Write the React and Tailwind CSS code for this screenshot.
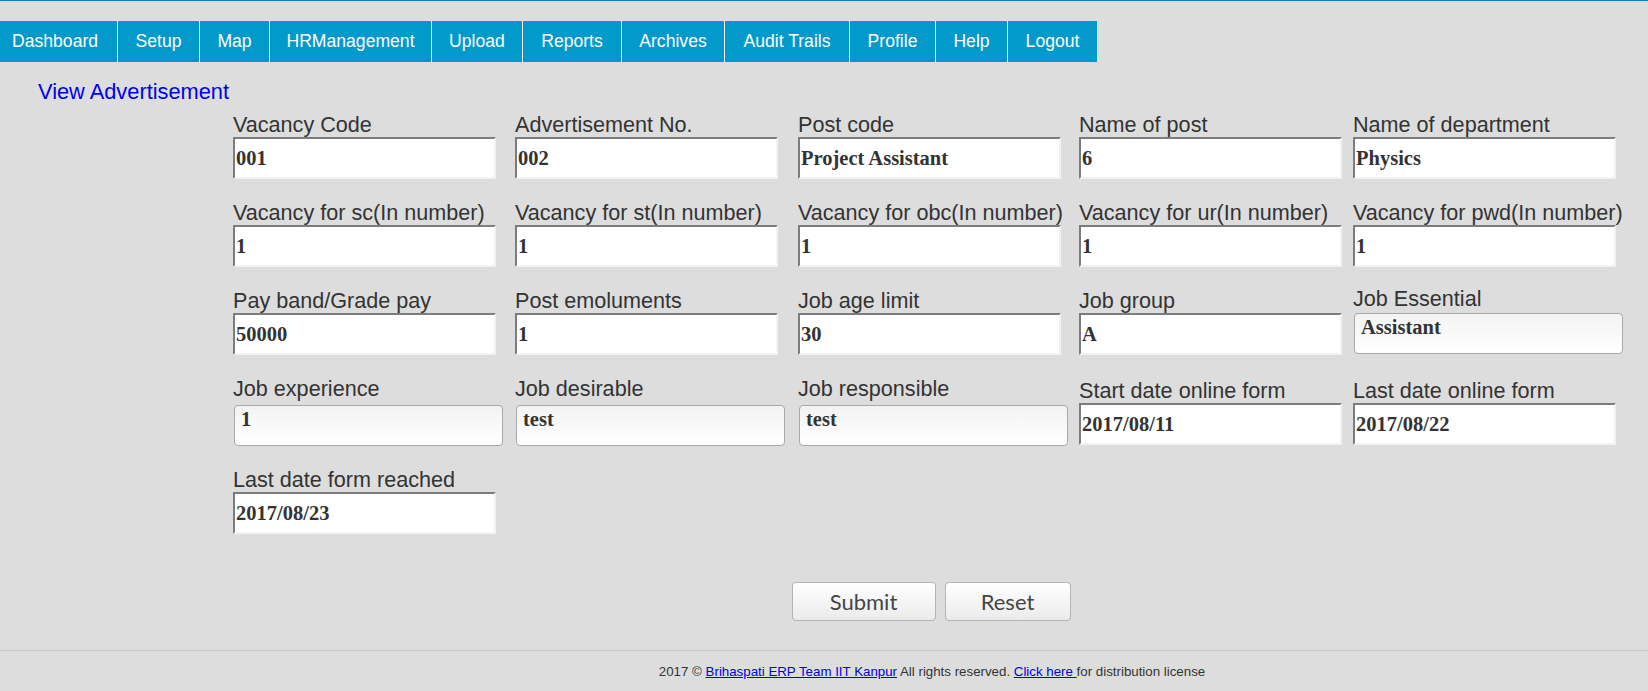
const navItems = [
  { label: 'Dashboard', cls: 'w-[118px] pl-[12px] text-left border-r' },
  { label: 'Setup', cls: 'w-[82px] text-center border-r' },
  { label: 'Map', cls: 'w-[70px] text-center border-r' },
  { label: 'HRManagement', cls: 'w-[162px] text-center border-r' },
  { label: 'Upload', cls: 'w-[91px] text-center border-r' },
  { label: 'Reports', cls: 'w-[99px] text-center border-r' },
  { label: 'Archives', cls: 'w-[103px] text-center border-r' },
  { label: 'Audit Trails', cls: 'w-[125px] text-center border-r' },
  { label: 'Profile', cls: 'w-[86px] text-center border-r' },
  { label: 'Help', cls: 'w-[72px] text-center border-r' },
  { label: 'Logout', cls: 'w-[89px] text-center' },
]

// each row: [label, value, kind]  kind: input | area | areaUp | date
const rows = [
  [
    ['Vacancy Code', '001', 'input'],
    ['Advertisement No.', '002', 'input'],
    ['Post code', 'Project Assistant', 'input'],
    ['Name of post', '6', 'input'],
    ['Name of department', 'Physics', 'input'],
  ],
  [
    ['Vacancy for sc(In number)', '1', 'input'],
    ['Vacancy for st(In number)', '1', 'input'],
    ['Vacancy for obc(In number)', '1', 'input'],
    ['Vacancy for ur(In number)', '1', 'input'],
    ['Vacancy for pwd(In number)', '1', 'input'],
  ],
  [
    ['Pay band/Grade pay', '50000', 'input'],
    ['Post emoluments', '1', 'input'],
    ['Job age limit', '30', 'input'],
    ['Job group', 'A', 'input'],
    ['Job Essential', 'Assistant', 'areaUp'],
  ],
  [
    ['Job experience', '1', 'area'],
    ['Job desirable', 'test', 'area'],
    ['Job responsible', 'test', 'area'],
    ['Start date online form', '2017/08/11', 'date'],
    ['Last date online form', '2017/08/22', 'date'],
  ],
  [['Last date form reached', '2017/08/23', 'input']],
]

const labelCls = "block whitespace-nowrap text-[21.6px] leading-[24px] text-[#333] font-['Liberation_Sans',Arial,sans-serif]"
const valueFont = "font-['Liberation_Serif','Times_New_Roman',serif] font-bold text-[20.5px] text-[#333]"
const inputCls =
  'block w-[263px] h-[42px] bg-white pl-[1px] border-2 border-t-[#7c7c7c] border-l-[#7c7c7c] border-r-[#f2f2f2] border-b-[#f2f2f2] outline-none ' +
  valueFont
const areaCls =
  'block ml-[1px] w-[269px] h-[41px] resize-none overflow-hidden rounded-[4px] border border-[#a9a9a9] bg-gradient-to-b from-[#f3f3f3] to-white px-[6px] pt-[2px] leading-[22px] outline-none ' +
  valueFont

function Field({ label, value, kind }) {
  if (kind === 'area' || kind === 'areaUp') {
    return (
      <div className={kind === 'areaUp' ? '-mt-[2px]' : ''}>
        <span className={labelCls}>{label}</span>
        <textarea
          readOnly
          defaultValue={value}
          className={(kind === 'areaUp' ? 'mt-[2px] ' : 'mt-[4px] ') + areaCls}
        />
      </div>
    )
  }
  return (
    <div className={kind === 'date' ? 'pt-[2px]' : ''}>
      <span className={labelCls}>{label}</span>
      <input readOnly defaultValue={value} className={inputCls} />
    </div>
  )
}

export default function App() {
  return (
    <div className="min-h-[691px] bg-[#dddddd] font-['Liberation_Sans',Arial,sans-serif]">
      <div className="h-[1px] bg-[#0b80c2]" />

      <nav className="mt-[20px] flex h-[41px] w-[1097px] bg-[#0399cb] text-white">
        {navItems.map((item) => (
          <a
            key={item.label}
            href="#"
            className={'flex h-full items-center border-white text-[17.6px] whitespace-nowrap ' + item.cls}
          >
            <span className={item.label === 'Dashboard' ? '' : 'w-full'}>{item.label}</span>
          </a>
        ))}
      </nav>

      <h2 className="mt-[18px] pl-[38px] text-[21.8px] leading-[24px] font-normal text-[#0000ee]">
        View Advertisement
      </h2>

      <form className="mt-[9px] pl-[233px]" onSubmit={(e) => e.preventDefault()}>
        <div className="flex flex-col gap-y-[22px]">
          {rows.map((row, i) => (
            <div key={i} className="grid grid-cols-[282px_283px_281px_274px_272px] items-start">
              {row.map(([label, value, kind]) => (
                <Field key={label} label={label} value={value} kind={kind} />
              ))}
            </div>
          ))}
        </div>
      </form>

      <div className="mt-[48px] flex justify-center gap-[9px] pl-[214px]">
        <button className="h-[39px] w-[144px] rounded-[4px] border border-[#b4b4b4] bg-gradient-to-b from-white to-[#ebebeb] font-['Lato',sans-serif] text-[22px] text-[#454545]">
          Submit
        </button>
        <button className="h-[39px] w-[126px] rounded-[4px] border border-[#b4b4b4] bg-gradient-to-b from-white to-[#ebebeb] font-['Lato',sans-serif] text-[22px] text-[#454545]">
          Reset
        </button>
      </div>

      <footer className="mt-[29px] flex h-[39px] items-center justify-center border-t border-[#cbcbcb] pt-[3px] pl-[216px] text-[13.3px] text-[#333]">
        <p>
          2017 © <a href="#" className="text-[#0000ee] underline">Brihaspati ERP Team IIT Kanpur</a> All rights
          reserved. <a href="#" className="text-[#0000ee] underline">Click here </a>for distribution license
        </p>
      </footer>
    </div>
  )
}
